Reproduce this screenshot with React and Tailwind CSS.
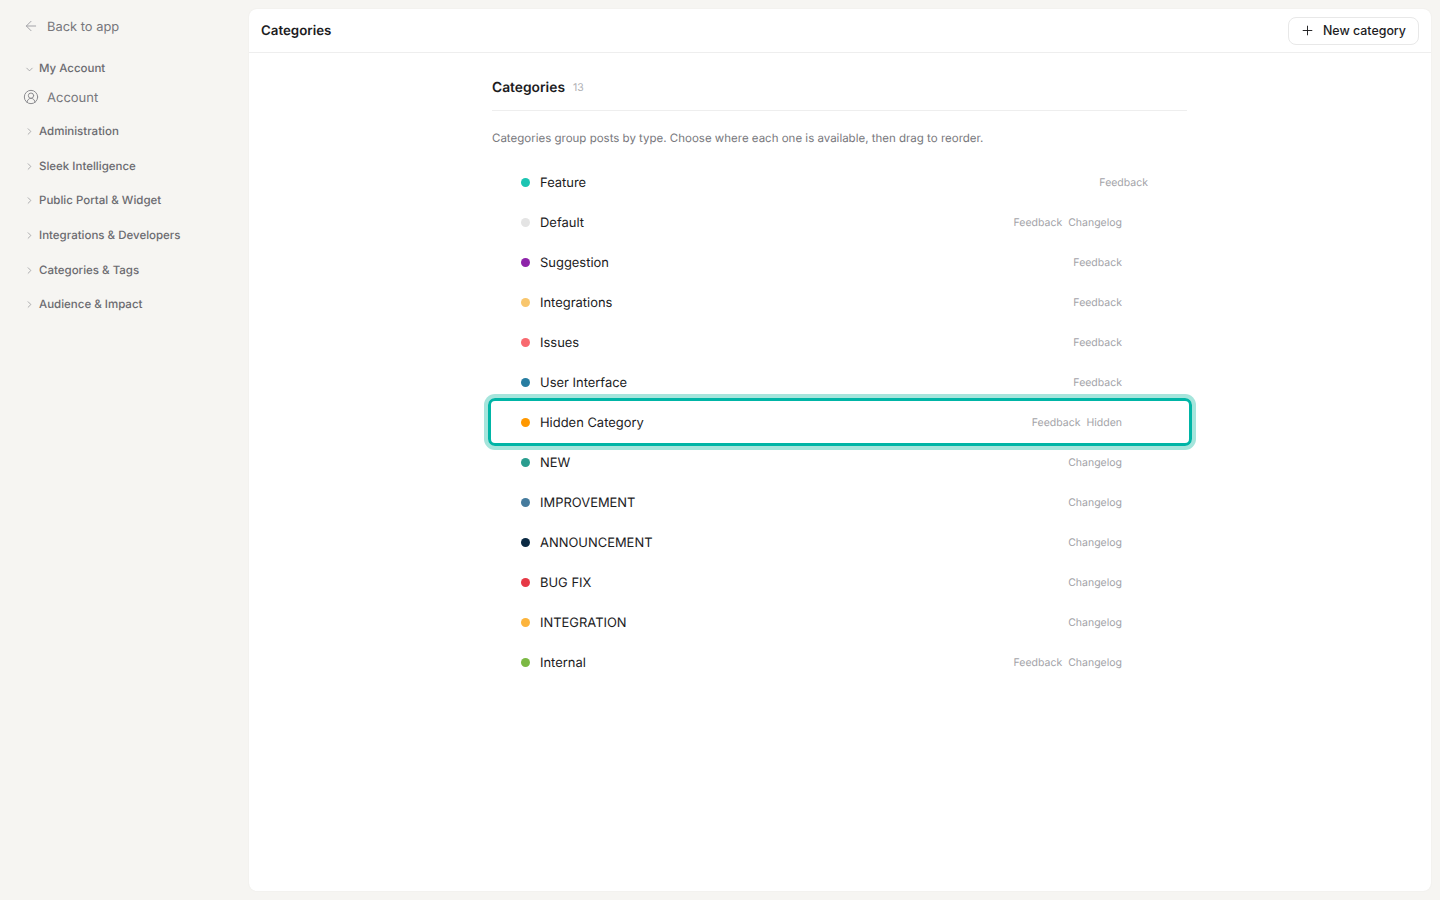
import { ArrowLeft, ChevronDown, ChevronRight, CircleUserRound, Plus } from "lucide-react";

const sections = [
  "Administration",
  "Sleek Intelligence",
  "Public Portal & Widget",
  "Integrations & Developers",
  "Categories & Tags",
  "Audience & Impact",
];

const categories = [
  { name: "Feature", color: "bg-[#1cc4b2]", tags: ["Feedback"], first: true },
  { name: "Default", color: "bg-[#e4e4e4]", tags: ["Feedback", "Changelog"] },
  { name: "Suggestion", color: "bg-[#8e24aa]", tags: ["Feedback"] },
  { name: "Integrations", color: "bg-[#f8c66d]", tags: ["Feedback"] },
  { name: "Issues", color: "bg-[#f8696f]", tags: ["Feedback"] },
  { name: "User Interface", color: "bg-[#277da1]", tags: ["Feedback"] },
  { name: "Hidden Category", color: "bg-[#ff9800]", tags: ["Feedback", "Hidden"], focused: true },
  { name: "NEW", color: "bg-[#2a9d8f]", tags: ["Changelog"] },
  { name: "IMPROVEMENT", color: "bg-[#457b9d]", tags: ["Changelog"] },
  { name: "ANNOUNCEMENT", color: "bg-[#0b2a43]", tags: ["Changelog"] },
  { name: "BUG FIX", color: "bg-[#e63946]", tags: ["Changelog"] },
  { name: "INTEGRATION", color: "bg-[#fcb43c]", tags: ["Changelog"] },
  { name: "Internal", color: "bg-[#7cb944]", tags: ["Feedback", "Changelog"] },
];

const CategoryRow = ({ category }) => (
  <div className="relative flex h-10 items-center pl-[29px]">
    {category.focused && (
      <div className="pointer-events-none absolute -inset-y-1 -left-1 -right-1 rounded-[7px] border-[3px] border-[#00b5a6] shadow-[0_0_0_4px_#a5e5dc]"></div>
    )}
    <span className={`h-[9px] w-[9px] rounded-full ${category.color}`}></span>
    <span className="ml-[10px] pt-[2px] text-[12.95px] leading-[20px] text-[#1c1c1e]">{category.name}</span>
    <div className={`ml-auto flex gap-1.5 pt-[2px] text-[10.5px] text-[#a3a3a8] ${category.first ? "mr-[40px]" : "mr-[66px]"}`}>
      {category.tags.map((tag) => (
        <span key={tag}>{tag}</span>
      ))}
    </div>
  </div>
);

export default function App() {
  return (
    <div className="flex h-[900px] overflow-hidden bg-[#f6f5f2] font-['Inter',sans-serif] antialiased [text-rendering:geometricPrecision]">
      {/* Sidebar */}
      <aside className="w-[249px] shrink-0 pl-6">
        <div className="flex h-[52px] items-center gap-[8px] text-[12.9px] text-[#77777c]">
          <ArrowLeft size={16} strokeWidth={1.5} className="-ml-px text-[#a3a3a8]" />
          <span className="pt-[3px]">Back to app</span>
        </div>
        <div className="flex h-[32px] items-center gap-[4px] pt-[2px] text-[11.5px] font-medium text-[#6b6b70]">
          <ChevronDown size={11} strokeWidth={1.5} className="text-[#8c8c90]" />
          <span>My Account</span>
        </div>
        <div className="flex h-[26px] items-center gap-[7px] text-[13px] text-[#77777c]">
          <CircleUserRound size={16} strokeWidth={1.5} className="-ml-px mr-px text-[#8c8c90]" />
          <span className="pt-[3px]">Account</span>
        </div>
        <div className="mt-[4.5px] flex flex-col">
          {sections.map((section) => (
            <div key={section} className="flex h-[34.6px] items-center gap-[4px] text-[11.5px] font-medium text-[#6b6b70]">
              <ChevronRight size={11} strokeWidth={1.5} className="text-[#8c8c90]" />
              <span>{section}</span>
            </div>
          ))}
        </div>
      </aside>

      {/* Main panel */}
      <main className="mt-[9px] mb-[9px] mr-[9px] flex flex-1 flex-col rounded-lg bg-white shadow-[0_0_2px_rgba(0,0,0,0.06)]">
        <header className="flex h-[44px] shrink-0 items-center justify-between border-b border-[#eeeeee] pl-3 pr-3">
          <h1 className="pt-[2px] text-[13.3px] font-semibold text-[#1c1c1e]">Categories</h1>
          <button className="flex h-[28px] w-[131px] items-center justify-center gap-[8px] rounded-lg border border-[#e8e8e8] bg-white text-[12.4px] font-medium text-[#1c1c1e]">
            <Plus size={15} strokeWidth={1.5} className="-ml-px" />
            <span className="pt-[2px]">New category</span>
          </button>
        </header>

        <div className="ml-[243px] w-[695px]">
          <div className="flex h-[58px] items-center gap-[8px] border-b border-[#eeeeee] pt-[11px]">
            <h2 className="pt-[2px] text-[13.8px] font-semibold text-[#1c1c1e]">Categories</h2>
            <span className="pt-[1px] text-[10.5px] text-[#b0b0b4]">13</span>
          </div>
          <p className="mt-[20px] text-[11.5px] leading-[15px] text-[#77777c]">
            Categories group posts by type. Choose where each one is available, then drag to reorder.
          </p>
          <div className="mt-[16px] -mr-px flex flex-col">
            {categories.map((category) => (
              <CategoryRow key={category.name} category={category} />
            ))}
          </div>
        </div>
      </main>
    </div>
  );
}
